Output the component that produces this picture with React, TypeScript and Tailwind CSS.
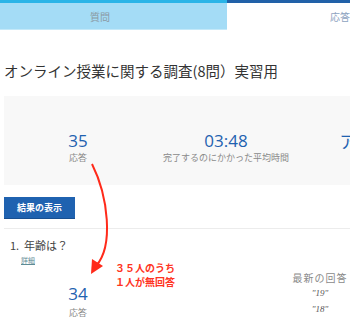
import React from "react";

const jp = { fontFamily: '"Noto Sans CJK JP", "Noto Sans", sans-serif' };
const num = { fontFamily: '"Open Sans", "Noto Sans CJK JP", sans-serif' };
const serif = { fontFamily: '"Liberation Serif", serif' };

export default function App() {
  return (
    <div className="relative w-[350px] h-[320px] overflow-hidden bg-white" style={jp}>
      <div className="flex w-[454px]">
        <div className="w-[227px] shrink-0 flex flex-col">
          <div className="h-[3px] bg-[#2ab4e7]" />
          <div className="h-[26px] bg-[#a4dcf6] flex items-center justify-center pr-[27px] text-[10px] text-[#8a99a3]">質問</div>
          <div className="h-[1px] bg-[#c4e9f9]" />
        </div>
        <div className="w-[227px] shrink-0 flex flex-col">
          <div className="h-[3px] bg-[#2161a8]" />
          <div className="h-[26px] bg-white flex items-center pl-[103px] text-[10px] text-[#8ea3bf]">応答</div>
        </div>
      </div>

      <div className="ml-[4px] mt-[31px] text-[14.5px] leading-[20px] text-[#333]">
        オンライン授業に関する調査(8問）実習用
      </div>

      <div className="ml-[4px] mt-[15px] h-[89px] bg-[#f8f8f8] flex w-[500px] pt-[35px]">
        <div className="w-[148px] shrink-0 flex flex-col items-center">
          <div className="text-[17px] leading-[20px] text-[#1f62b0]" style={num}>35</div>
          <div className="text-[9px] leading-[12px] mt-[1px] text-[#8a8a8a]">応答</div>
        </div>
        <div className="w-[148px] shrink-0 flex flex-col items-center">
          <div className="text-[17px] leading-[20px] text-[#1f62b0]" style={num}>03:48</div>
          <div className="text-[9px] leading-[12px] mt-[1px] text-[#8a8a8a]">完了するのにかかった平均時間</div>
        </div>
        <div className="w-[162px] shrink-0 flex flex-col items-center">
          <div className="text-[17px] leading-[20px] text-[#1f62b0]">アクティブ</div>
          <div className="text-[9px] leading-[12px] mt-[1px] text-[#8a8a8a]">状態</div>
        </div>
      </div>

      <div className="ml-[4px] mt-[12px] w-[71px] h-[22px] bg-[#1f62b0] flex items-center justify-center text-white text-[9px] font-bold border-b border-[#184f90]">
        結果の表示
      </div>

      <div className="ml-[4px] mt-[9px] h-[1px] bg-[#ececec]" />

      <div className="ml-[10px] mt-[8px] text-[11px] leading-[16px] text-[#444]">1.&nbsp;&nbsp;年齢は？</div>
      <div className="ml-[21px] mt-[2px] text-[7px] leading-[10px] text-[#5e8c96] underline">詳細</div>

      <div className="flex mt-[2px]">
        <div className="ml-[4px] w-[148px] shrink-0 flex flex-col items-center pt-[17px]">
          <div className="text-[17px] leading-[20px] text-[#1f62b0]" style={num}>34</div>
          <div className="text-[9px] leading-[12px] mt-[3px] text-[#8a8a8a]">応答</div>
        </div>
        <div className="ml-auto w-[60px] mr-[0px] flex flex-col items-center pt-[4px]">
          <div className="text-[10px] leading-[14px] tracking-[1px] text-[#8a8a8a]">最新の回答</div>
          <div className="text-[9px] leading-[16px] italic text-[#555]" style={serif}>"19"</div>
          <div className="text-[9px] leading-[16px] italic text-[#555]" style={serif}>"18"</div>
        </div>
      </div>

      <div className="absolute left-[115px] top-[261px] text-[10px] leading-[14px] font-bold text-[#ff3322] tracking-[0px]">
        <div>３５人のうち</div>
        <div>１人が無回答</div>
      </div>

      <svg className="absolute left-0 top-0" width="350" height="320" viewBox="0 0 350 320">
        <path d="M92,164 C108,196 114,246 96,266" fill="none" stroke="#ff2a1a" strokeWidth="2" />
        <polygon points="91,274 92,259 103,266" fill="#ff2a1a" />
      </svg>
    </div>
  );
}
